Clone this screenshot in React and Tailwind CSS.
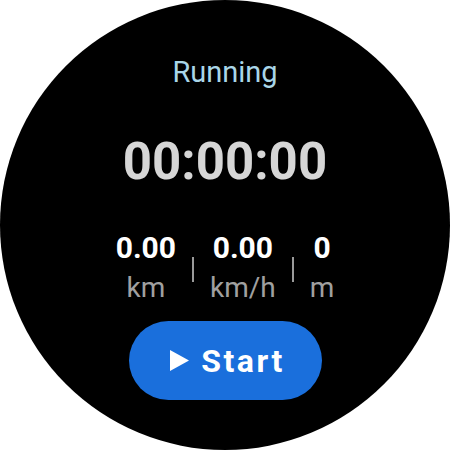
import React from "react";

function Stat({ value, unit }) {
  return (
    <div className="flex flex-col items-center">
      <div className="text-[30px] font-bold leading-[34px] text-white">{value}</div>
      <div className="mt-[6px] text-[28px] leading-[34px] text-[#a0a0a0]">{unit}</div>
    </div>
  );
}

function Divider() {
  return <div className="mt-[26px] h-[25px] w-[2px] bg-[#9a9a9a]" />;
}

export default function App() {
  return (
    <div
      className="w-[450px] h-[450px] bg-white"
      style={{ fontFamily: "Roboto, 'Noto Sans', sans-serif" }}
    >
      <div className="flex h-[450px] w-[450px] flex-col items-center rounded-full bg-black pt-[55px]">
        <div className="text-[29px] leading-[34px] text-[#a9d6e8]">Running</div>

        <div className="mt-[43px] text-[51px] font-bold leading-[60px] text-[#d6d6d6]">
          00:00:00
        </div>

        <div className="mt-[39px] flex items-start gap-[16px]">
          <Stat value="0.00" unit="km" />
          <Divider />
          <Stat value="0.00" unit="km/h" />
          <Divider />
          <Stat value="0" unit="m" />
        </div>

        <button className="mt-[16px] flex h-[79px] w-[193px] items-center justify-center gap-[11px] rounded-full bg-[#1a6fdc] pl-[4px] text-white">
          <svg width="21" height="23" viewBox="0 0 21 23">
            <path d="M1 1 L20 11.5 L1 22 Z" fill="white" />
          </svg>
          <span className="text-[32px] font-bold tracking-[2.5px]">Start</span>
        </button>
      </div>
    </div>
  );
}
